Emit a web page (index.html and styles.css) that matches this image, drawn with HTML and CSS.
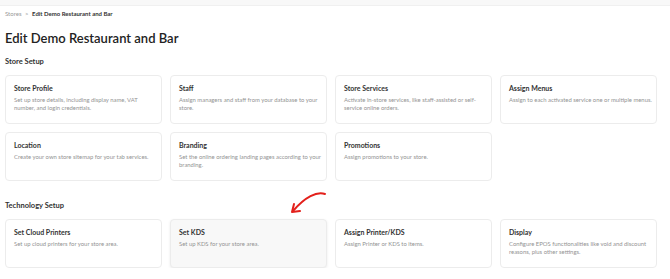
FILE: index.html
```
<!DOCTYPE html>
<html lang="en">
<head>
  <meta charset="UTF-8">
  <meta name="viewport" content="width=device-width, initial-scale=1.0">
  <title>Edit Demo Restaurant and Bar</title>
  <link rel="stylesheet" href="styles.css">
</head>
<body>
  <div class="topbar"></div>

  <div class="page">
    <div class="breadcrumb">
      <span class="crumb">Stores</span>
      <span class="sep">&gt;</span>
      <span class="current">Edit Demo Restaurant and Bar</span>
    </div>

    <h1>Edit Demo Restaurant and Bar</h1>

    <h2>Store Setup</h2>
    <div class="cards">
      <div class="card">
        <h3>Store Profile</h3>
        <p>Set up store details, including display name, VAT number, and login credentials.</p>
      </div>
      <div class="card">
        <h3>Staff</h3>
        <p>Assign managers and staff from your database to your store.</p>
      </div>
      <div class="card">
        <h3>Store Services</h3>
        <p>Activate in-store services, like staff-assisted or self-service online orders.</p>
      </div>
      <div class="card">
        <h3>Assign Menus</h3>
        <p>Assign to each activated service one or multiple menus.</p>
      </div>
      <div class="card">
        <h3>Location</h3>
        <p>Create your own store sitemap for your tab services.</p>
      </div>
      <div class="card">
        <h3>Branding</h3>
        <p>Set the online ordering landing pages according to your branding.</p>
      </div>
      <div class="card">
        <h3>Promotions</h3>
        <p>Assign promotions to your store.</p>
      </div>
    </div>

    <h2 class="tech">Technology Setup</h2>
    <div class="cards">
      <div class="card">
        <h3>Set Cloud Printers</h3>
        <p>Set up cloud printers for your store area.</p>
      </div>
      <div class="card active">
        <h3>Set KDS</h3>
        <p>Set up KDS for your store area.</p>
        <svg class="arrow" width="46" height="28" viewBox="0 0 46 28">
          <path d="M39 5 C31 2 19 8 7 22" fill="none" stroke="#e3201b" stroke-width="2" stroke-linecap="round"/>
          <path d="M8 15 L6 23 L14 22" fill="none" stroke="#e3201b" stroke-width="2" stroke-linecap="round" stroke-linejoin="round"/>
        </svg>
      </div>
      <div class="card">
        <h3>Assign Printer/KDS</h3>
        <p>Assign Printer or KDS to items.</p>
      </div>
      <div class="card">
        <h3>Display</h3>
        <p>Configure EPOS functionalities like void and discount reasons, plus other settings.</p>
      </div>
    </div>
  </div>
</body>
</html>
```

FILE: styles.css
```
body {
  margin: 0;
  padding: 0;
  background: #fff;
  font-family: 'Lato', 'Open Sans', sans-serif;
  color: #222;
}

.topbar {
  height: 5px;
  background: #f8f8f8;
  border-bottom: 1px solid #f0f0f0;
}

.page {
  width: 652px;
  padding-left: 5px;
}

.breadcrumb {
  margin-top: 4px;
  font-size: 6px;
  line-height: 8px;
}

.crumb,
.sep {
  color: #999;
}

.sep {
  margin: 0 2px;
}

.current {
  font-weight: 700;
  color: #333;
}

h1 {
  margin: 12px 0 0;
  font-size: 13px;
  line-height: 16px;
  font-weight: 600;
  color: #222;
}

h2 {
  margin: 11px 0 0;
  font-size: 7.5px;
  line-height: 10px;
  font-weight: 700;
  color: #333;
}

h2.tech {
  margin-top: 20px;
}

.cards {
  display: grid;
  grid-template-columns: repeat(4, 1fr);
  grid-auto-rows: 49px;
  gap: 8px;
  margin-top: 8px;
}

.card {
  position: relative;
  box-sizing: border-box;
  border: 1px solid #ececec;
  border-radius: 4px;
  padding: 8px 3px 0 8px;
  background: #fff;
}

.card.active {
  background: #f8f8f8;
  box-shadow: 0 1px 3px rgba(0,0,0,0.08);
}

.card h3 {
  margin: 0;
  font-size: 7px;
  line-height: 9px;
  font-weight: 700;
  color: #333;
}

.card p {
  margin: 3px 0 0;
  font-size: 5.9px;
  line-height: 8px;
  color: #939393;
}

.arrow {
  position: absolute;
  left: 115px;
  top: -31px;
}
```
